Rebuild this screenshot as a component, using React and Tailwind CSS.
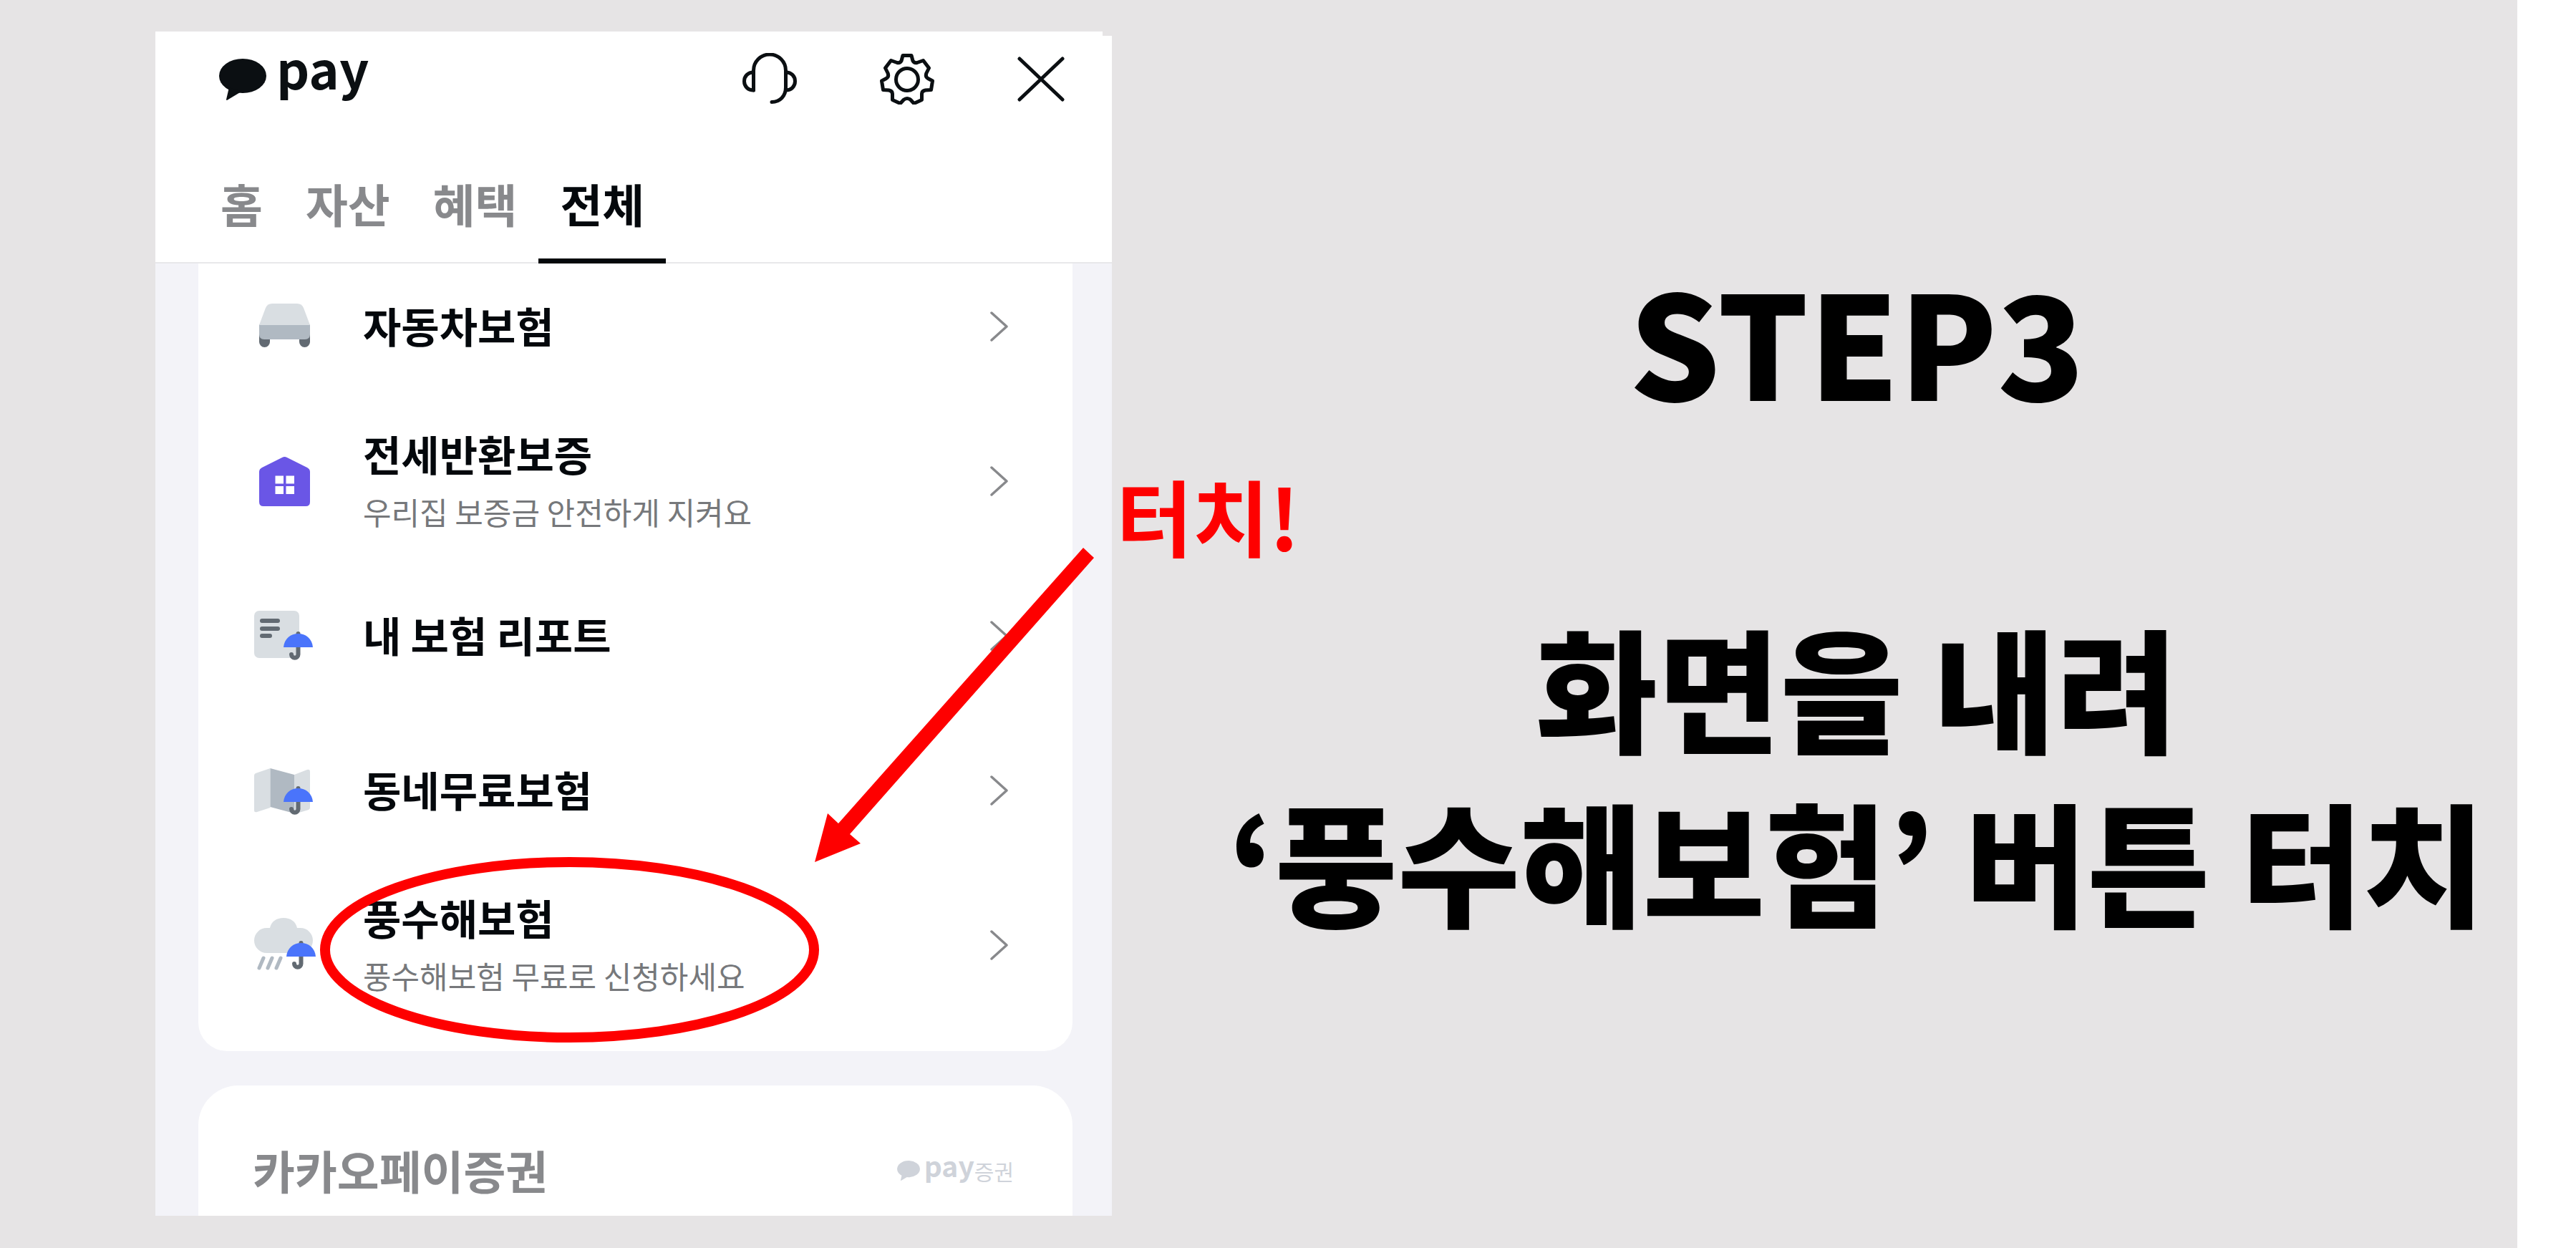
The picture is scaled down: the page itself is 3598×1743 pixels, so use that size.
const rows = [
    { title: "자동차보험", icon: CarIcon },
    { title: "전세반환보증", desc: "우리집 보증금 안전하게 지켜요", icon: HouseIcon },
    { title: "내 보험 리포트", icon: ReportIcon },
    { title: "동네무료보험", icon: MapIcon },
    { title: "풍수해보험", desc: "풍수해보험 무료로 신청하세요", icon: RainIcon },
]

const tabs = ["홈", "자산", "혜택", "전체"]

function Bubble({ className }) {
    return (
        <svg viewBox="0 0 66 58" className={className} fill="currentColor" aria-hidden="true">
            <ellipse cx="33" cy="24" rx="33" ry="24" />
            <path d="M14 40 10 57q0 1 1 1L31 46Z" />
        </svg>
    )
}

function HeadsetIcon() {
    return (
        <svg viewBox="0 0 76 72" className="w-[76px] h-[72px]" fill="none" stroke="currentColor" strokeWidth="5" strokeLinecap="round" strokeLinejoin="round">
            <path d="M15.500 52V24.500a22.500 22.500 0 0 1 45 0V48c0 12-8 20.500-19.500 20.500" />
            <path d="M15.500 27C7.500 27 2.500 32.500 2.500 39.500S7.500 52 15.500 52" />
            <path d="M60.500 27c8 0 13 5.500 13 12.500s-5 12.500-13 12.500" />
        </svg>
    )
}

function GearIcon() {
    return (
        <svg viewBox="0 0 76 72" className="w-[76px] h-[72px]" fill="none" stroke="currentColor" strokeWidth="5" strokeLinejoin="round">
            <path d="M32 3.500H44l2 7.500q2 3.500 6 2.500L60.500 10.500 68.500 21 65 28q-2 5 2 7.500L73.500 39 71.500 51.500 63.500 52q-5 1-5 5V65.500L47.500 70.500 43 65.500q-5-4-10 0L28.500 70.500 17.500 65.500V57q0-4-5-5L4.500 51.500 2.500 39 9 35.500q4-2.500 2-7.500L7.500 21 15.500 10.500 24 13.500q4 1 6-2.500Z" />
            <circle cx="38" cy="37" r="15.500" />
        </svg>
    )
}

function CloseIcon() {
    return (
        <svg viewBox="0 0 66 72" className="w-[66px] h-[72px]" fill="none" stroke="currentColor" strokeWidth="5" strokeLinecap="round">
            <path d="M3 8 63 65M63 8 3 65" />
        </svg>
    )
}

function Chevron() {
    return (
        <svg viewBox="0 0 26 44" className="w-[26px] h-[44px] shrink-0 text-[#88898c]" fill="none" stroke="currentColor" strokeWidth="3.500" strokeLinecap="round" strokeLinejoin="round" aria-hidden="true">
            <path d="M3 3 24 22 3 41" />
        </svg>
    )
}

function IconBox({ children }) {
    return (
        <svg viewBox="0 0 88 88" className="w-[88px] h-[88px] shrink-0" aria-hidden="true">
            {children}
        </svg>
    )
}

function Umbrella({ x = 0 }) {
    return (
        <g transform={`translate(${x} 0)`}>
            <circle cx="61.500" cy="41" r="3" fill="#626a72" />
            <path d="M61.500 58V70a4.700 4.700 0 0 1-9.500 0" fill="none" stroke="#626a72" strokeWidth="6" strokeLinecap="round" />
            <path d="M41 60C42 48 51 41 61.500 41S81 48 82 60Z" fill="#4a74fb" />
        </g>
    )
}

function CarIcon() {
    return (
        <IconBox>
            <path d="M7 54H22V65.500a7.500 7.500 0 0 1-15 0ZM63 54H78V65.500a7.500 7.500 0 0 1-15 0Z" fill="#626a72" />
            <path d="M7 41H78V55q0 7-7 7H14q-7 0-7-7Z" fill="#b0b9c2" />
            <path d="M7 42 16 18Q18.500 12 25 12H60Q66.500 12 69 18L78 42Z" fill="#d9dee2" />
        </IconBox>
    )
}

function HouseIcon() {
    return (
        <IconBox>
            <path d="M39 11Q42.500 9 46 11L74 25Q78 27 78 31V73Q78 79 72 79H13Q7 79 7 73V31Q7 27 11 25Z" fill="#6a56e6" />
            <path d="M29.500 36.500H41V47.500H29.500ZM44.500 36.500H56V47.500H44.500ZM29.500 51H41V62H29.500ZM44.500 51H56V62H44.500Z" fill="#fff" />
        </IconBox>
    )
}

function ReportIcon() {
    return (
        <IconBox>
            <rect y="9" width="63" height="66" rx="7" fill="#d9dee2" />
            <path d="M11 23H33M11 34H33M11 44H22" stroke="#626a72" strokeWidth="6" strokeLinecap="round" />
            <Umbrella />
        </IconBox>
    )
}

function MapIcon() {
    return (
        <IconBox>
            <path d="M0 23Q0 21 2 20L22.500 13V68L4 74Q0 75 0 72ZM56 22 74 15Q78 14 78 18V68Q78 70 76 71L56 77Z" fill="#d9dee2" />
            <path d="M22.500 13 56 22V76L22.500 67Z" fill="#b0b9c2" />
            <Umbrella />
        </IconBox>
    )
}

function RainIcon() {
    return (
        <IconBox>
            <path d="M17.500 20H22C24 11 31 6 41 6s17 5 19 14h4.500a17.500 17.500 0 0 1 0 35h-47a17.500 17.500 0 0 1 0-35Z" fill="#d9dee2" />
            <path d="M13 62 7 76M25 62 19 76M37 62 31 76" stroke="#b0b9c2" strokeWidth="5" strokeLinecap="round" />
            <Umbrella x={4} />
        </IconBox>
    )
}

function Header() {
    return (
        <header className="bg-white border-b-2 border-[#e8e8ea]">
            <div className="flex items-start justify-between pt-[30px] pl-[89px] pr-[66px] text-[#0b0f12]">
                <div className="flex items-start gap-[14px]">
                    <Bubble className="w-[66px] h-[58px] mt-2" />
                    <span className="text-[72px] leading-[40px] font-bold">pay</span>
                </div>
                <div className="flex items-center gap-[116px]">
                    <button aria-label="고객센터"><HeadsetIcon /></button>
                    <button aria-label="설정"><GearIcon /></button>
                    <button aria-label="닫기"><CloseIcon /></button>
                </div>
            </div>
            <nav className="flex pl-[61px] pt-[87px] -mb-[2px]">
                {tabs.map(tab => (
                    <button
                        key={tab}
                        className={`px-[30px] pt-3 pb-10 text-[64px] leading-[76px] font-bold border-b-[7px] ${tab === "전체" ? "text-[#04080c] border-[#04080c]" : "text-[#88898c] border-transparent"}`}
                    >
                        {tab}
                    </button>
                ))}
            </nav>
        </header>
    )
}

function Row({ title, desc, icon: Icon }) {
    return (
        <li>
            <button className="w-full h-[216px] flex items-center gap-16 pl-[78px] pr-[90px] text-left">
                <Icon />
                <span className="flex-1 pb-1">
                    <span className="block text-[58px] leading-[88px] font-bold text-[#04080c]">{title}</span>
                    {desc && <span className="block text-[43px] leading-[74px] text-[#76787b]">{desc}</span>}
                </span>
                <Chevron />
            </button>
        </li>
    )
}

function Annotations() {
    return (
        <>
            <svg viewBox="0 0 1336 1654" className="absolute left-0 top-0 w-[1336px] h-[1654px] pointer-events-none" aria-hidden="true">
                <ellipse cx="578.500" cy="1282.500" rx="341.500" ry="122.500" fill="none" stroke="#fe0000" strokeWidth="14" />
                <path d="M1296 721 1311 735 970 1121 985 1134 921 1160 939 1092 954 1106Z" fill="#fe0000" />
            </svg>
            <strong className="absolute left-full top-[594px] pl-1.5 text-[116px] leading-[160px] font-bold text-[#fe0000] whitespace-nowrap">터치!</strong>
        </>
    )
}

export default function App() {
    return (
        <div className="min-h-screen flex bg-white pr-[82px] font-['Noto_Sans_CJK_KR',sans-serif]">
            <main className="flex-1 flex bg-[#e6e4e5] pl-[217px]">
                <div className="relative w-[1336px] shrink-0 mt-11 mb-[45px] flex flex-col bg-[#f3f3f8]">
                    <span className="absolute right-0 top-0 w-[13px] h-[6px] bg-[#e6e4e5]" />
                    <Header />
                    <div className="flex-1 flex flex-col pl-[60px] pr-[55px] overflow-hidden">
                        {/* list is scrolled a little under the header */}
                        <ul className="-mt-5 pb-10 bg-white rounded-b-[40px]">
                            {rows.map(row => <Row key={row.title} {...row} />)}
                        </ul>
                        <section className="flex-1 mt-12 flex items-start justify-between pt-[73px] pl-[76px] pr-[82px] bg-white rounded-t-[56px]">
                            <h2 className="text-[64px] leading-[88px] font-bold text-[#88898c]">카카오페이증권</h2>
                            <div className="flex items-center pt-6 text-[#cfd3da]">
                                <Bubble className="w-[32px] h-[28px] mr-[6px]" />
                                <span className="self-start text-[39px] leading-[28px] font-bold">pay</span>
                                <span className="text-[30px] leading-[44px]">증권</span>
                            </div>
                        </section>
                    </div>
                    <Annotations />
                </div>
                <div className="flex-1 flex flex-col justify-center pl-[118px] pb-[68px] text-center font-black text-black whitespace-nowrap">
                    <h1 className="text-[200px] leading-[240px]">STEP3</h1>
                    <p className="mt-[243px] text-[186px] leading-[243px]">
                        화면을 내려<br />
                        ‘풍수해보험’ 버튼 터치
                    </p>
                </div>
            </main>
        </div>
    )
}
